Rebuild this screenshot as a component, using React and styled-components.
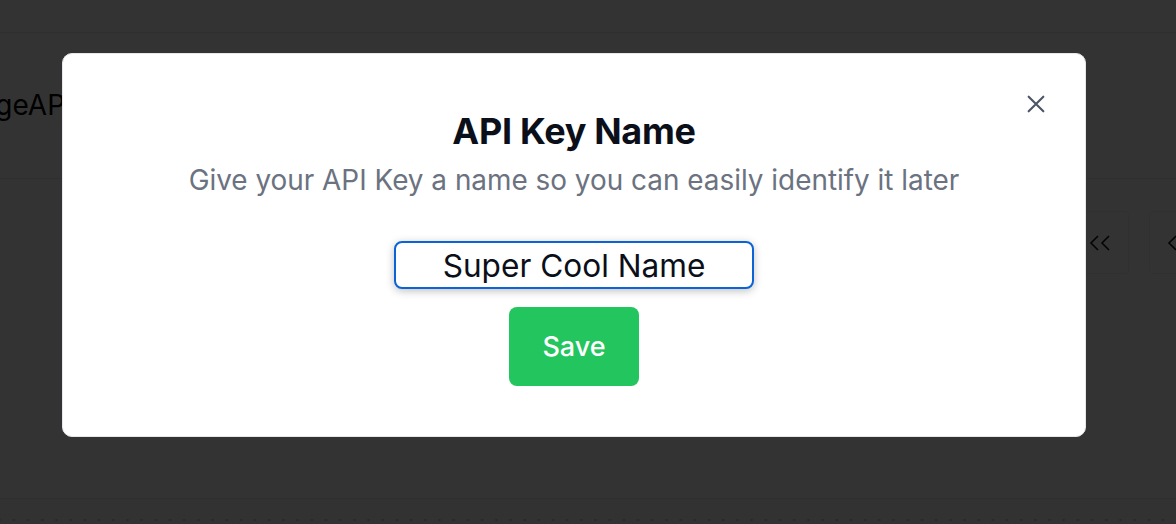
import styled, { createGlobalStyle } from "styled-components";

const GlobalStyle = createGlobalStyle`
  html, body { margin: 0; padding: 0; }
  body {
    width: 1176px;
    height: 524px;
    overflow: hidden;
    background: #ffffff;
    font-family: Inter, "Noto Sans", sans-serif;
  }
`;

const Page = styled.div`
  display: flex;
  flex-direction: column;
  height: 524px;
  background: #ffffff;
  color: #000;
`;

const TopBar = styled.div`
  height: 32px;
  border-bottom: 1px solid #e3e8e6;
`;

const HeaderRow = styled.div`
  height: 144px;
  display: flex;
  align-items: center;
  border-bottom: 1px solid #e3e8e6;
  padding-bottom: 1px;
`;

const PageTitle = styled.h1`
  margin: 0 0 0 -78px;
  font-size: 28px;
  font-weight: 400;
  line-height: 1;
  white-space: nowrap;
`;

const TableArea = styled.div`
  flex: 1;
  display: flex;
  justify-content: flex-end;
  align-items: flex-start;
  padding: 32px 0 0;
  gap: 20px;
  border-bottom: 1px solid #e9ebeb;
  margin-right: -31px;
`;

const PageButton = styled.div`
  width: 56px;
  height: 61px;
  display: flex;
  align-items: center;
  justify-content: center;
  border: 1px solid #eef0f0;
  border-radius: 4px;
  color: #111;
`;

const Footer = styled.div`
  height: 25px;
  background-color: #f8f8f8;
  background-image: radial-gradient(circle, #c9c9c9 1px, transparent 1.2px);
  background-size: 14.2px 6px;
  background-position: 21px 18px;
  background-repeat: repeat-x;
`;

const Overlay = styled.div`
  position: fixed;
  inset: 0;
  background: rgba(0, 0, 0, 0.8);
  padding: 53px 0 0 62px;
  box-sizing: border-box;
`;

const Modal = styled.div`
  position: relative;
  width: 1024px;
  height: 384px;
  box-sizing: border-box;
  background: #ffffff;
  border: 1px solid #e5e7eb;
  border-radius: 10px;
  display: flex;
  flex-direction: column;
  align-items: center;
  padding-top: 52px;
`;

const CloseButton = styled.button`
  position: absolute;
  top: 38px;
  right: 37px;
  width: 24px;
  height: 24px;
  padding: 0;
  border: none;
  background: none;
  color: #4b5563;
  display: flex;
  align-items: center;
  justify-content: center;
`;

const Title = styled.h2`
  margin: 0;
  font-size: 36px;
  font-weight: 700;
  line-height: 50px;
  color: #0b0f19;
  letter-spacing: -0.3px;
`;

const Subtitle = styled.p`
  margin: 0;
  font-size: 27.9px;
  line-height: 48px;
  color: #6b7280;
`;

const NameInput = styled.input`
  margin-top: 37px;
  width: 360px;
  height: 48px;
  box-sizing: border-box;
  border: 2px solid #0b63d6;
  border-radius: 8px;
  box-shadow: 0 2px 8px rgba(0, 0, 0, 0.25);
  outline: none;
  text-align: center;
  font-family: Inter, "Noto Sans", sans-serif;
  font-size: 31.6px;
  color: #0b0f19;
  caret-color: #000;
  padding: 0 8px;
`;

const SaveButton = styled.button`
  margin-top: 18px;
  width: 130px;
  height: 79px;
  border: none;
  border-radius: 8px;
  background: #22c55e;
  color: #ffffff;
  font-family: Inter, "Noto Sans", sans-serif;
  font-size: 27px;
  font-weight: 500;
`;

function Chevrons({ double }) {
  return (
    <svg width="24" height="18" viewBox="0 0 24 18" fill="none" stroke="currentColor" strokeWidth="1.6">
      <path d="M10 2 L3 9 L10 16" />
      {double && <path d="M21 2 L14 9 L21 16" />}
    </svg>
  );
}

export default function App() {
  return (
    <>
      <GlobalStyle />
      <Page>
        <TopBar />
        <HeaderRow>
          <PageTitle>ManageAPI Keys</PageTitle>
        </HeaderRow>
        <TableArea>
          <PageButton>
            <Chevrons double />
          </PageButton>
          <PageButton>
            <Chevrons />
          </PageButton>
        </TableArea>
        <Footer />
      </Page>
      <Overlay>
        <Modal>
          <CloseButton aria-label="Close">
            <svg width="22" height="22" viewBox="0 0 24 24" fill="none" stroke="currentColor" strokeWidth="2.3" strokeLinecap="round">
              <path d="M4 4 L20 20 M20 4 L4 20" />
            </svg>
          </CloseButton>
          <Title>API Key Name</Title>
          <Subtitle>Give your API Key a name so you can easily identify it later</Subtitle>
          <NameInput defaultValue="Super Cool Name" autoFocus />
          <SaveButton>Save</SaveButton>
        </Modal>
      </Overlay>
    </>
  );
}
